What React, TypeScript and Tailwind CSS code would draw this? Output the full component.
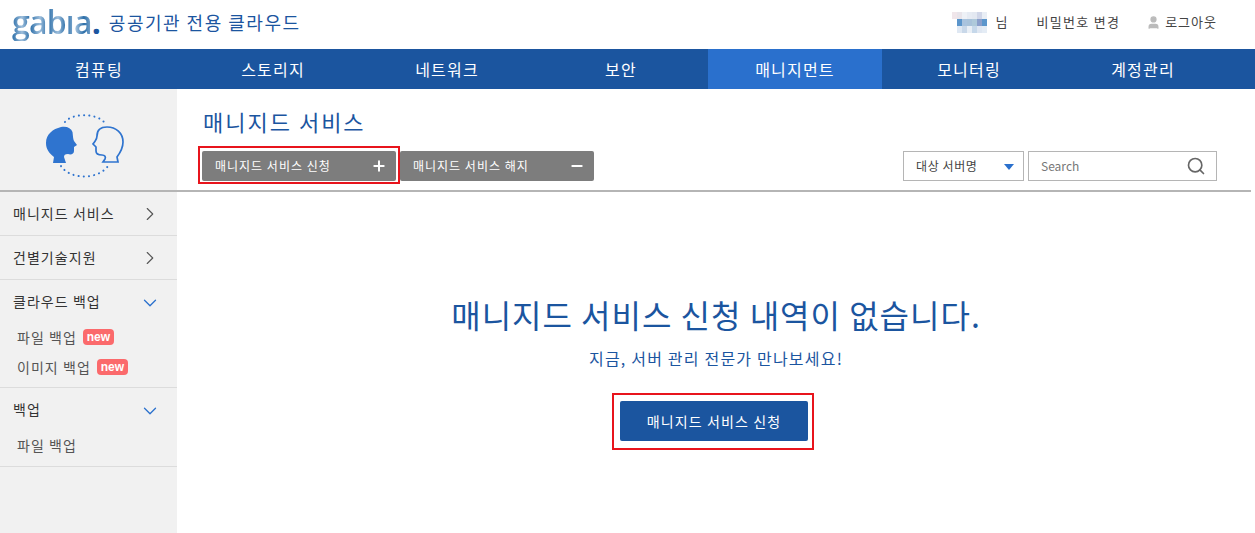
import { ChevronDown, ChevronRight, Minus, Plus, Search, User } from 'lucide-react';

const navItems = ['컴퓨팅', '스토리지', '네트워크', '보안', '매니지먼트', '모니터링', '계정관리'];

const mosaic = [
  ['#f0e6ea', '#e8e4ea', '#eef1f6', '#e6ebf3', '#e3e8f1', '#d0d6e8', '#e9eef5', '#ffffff'],
  ['#ffffff', '#5b95cb', '#a9c3de', '#a8c2da', '#aec9da', '#8b9fcb', '#5b96cc', '#ffffff'],
  ['#ffffff', '#dfe8f3', '#c9d8e9', '#e9eff6', '#c6d8ea', '#dfe7f2', '#e4ecf5', '#ffffff'],
];

// 블러 처리된 사용자 이름
const BlurredName = () => (
  <svg width="40" height="21" viewBox="0 0 40 21" className="block">
    {mosaic.map((row, y) =>
      row.map((fill, x) => <rect key={`${x}-${y}`} x={x * 5} y={y * 7} width="5" height="7" fill={fill} />)
    )}
  </svg>
);

const TalkIcon = () => (
  <svg width="82" height="66" viewBox="0 0 82 66" fill="none">
    <path
      d="M2 29 C2 20 9 15 17 13 C23 12 27 14 28.5 18 C29 22 29 25 30 27 L33 31 L30 33 L30 37 C30 40 27 41 24 40 C21 40 20 41 20 43 L22 49 L9 49 L10 43 C5 39 2 35 2 29 Z"
      fill="#2f74cf"
    />
    <path
      d="M79 28 C79 19 72 13 63 13 C56 13 53 17 53 22 C53 25 52 26 50.5 28 L49 30 L52 33 L52 37 C52 40 55 41 58 41 C61 41 62 43 61 45 L59 48 L74 48 L73 43 C76 39 79 35 79 28 Z"
      stroke="#2f74cf"
      strokeWidth="1.7"
    />
    <path d="M21 8 C28 -1 52 -1 60 8" stroke="#2f74cf" strokeWidth="2" strokeLinecap="round" strokeDasharray="0.1 5.1" />
    <path d="M17 52 C26 66 54 66 64 52" stroke="#2f74cf" strokeWidth="2" strokeLinecap="round" strokeDasharray="0.1 5.1" />
  </svg>
);

const NewBadge = () => (
  <span className="ml-[6px] inline-flex h-4 w-[31px] items-center justify-center rounded-[4px] bg-[#fb6a6c] font-['Liberation_Sans',sans-serif] text-[12px] font-bold tracking-normal text-white">
    new
  </span>
);

const App = () => {
  return (
    <div className="h-[533px] w-[1255px] overflow-hidden bg-white font-['Noto_Sans_CJK_KR',sans-serif]">
      {/* 상단 헤더 */}
      <header className="flex h-[49px] items-center pr-[38px] pb-[5px] pl-3">
        <span className="bg-[repeating-linear-gradient(90deg,#2b6ea8_0px,#9fbfdc_10px,#2b6ea8_18px)] bg-clip-text font-['Open_Sans',sans-serif] text-[32px] leading-[38px] font-semibold tracking-[-0.8px] text-transparent">
          gabıa
        </span>
        <span className="font-['Open_Sans',sans-serif] text-[32px] leading-[38px] font-bold text-[#1b559f]">.</span>
        <span className="ml-[8px] text-[18px] tracking-[1.5px] text-[#1b559f]">공공기관 전용 클라우드</span>
        <div className="ml-auto flex items-center text-[13px] tracking-[1px] text-[#444444]">
          <BlurredName />
          <span className="ml-[3px]">님</span>
          <span className="ml-[28px] tracking-[1.3px]">비밀번호 변경</span>
          <User size={15} fill="#bbbbbb" stroke="#bbbbbb" className="ml-[26px]" />
          <span className="ml-[4px]">로그아웃</span>
        </div>
      </header>

      {/* 메인 내비게이션 */}
      <nav className="flex h-10 bg-[#1b559f] px-3">
        {navItems.map((item) => (
          <a
            key={item}
            className={`flex h-10 w-[174px] items-center justify-center text-[16px] tracking-[1.2px] text-white ${
              item === '매니지먼트' ? 'bg-[#2a70cd]' : ''
            }`}
          >
            {item}
          </a>
        ))}
      </nav>

      <div className="flex h-[444px]">
        {/* 사이드바 */}
        <aside className="w-[177px] shrink-0 bg-[#f1f1f1] text-[14px] tracking-[1.05px] text-[#333333]">
          <div className="flex h-[103px] items-center justify-center border-b-2 border-[#b5b5b5] pt-[14px] pr-[7px]">
            <TalkIcon />
          </div>
          <div className="flex h-[44px] items-center justify-between border-b border-[#dcdcdc] pr-4 pl-[13px]">
            매니지드 서비스
            <ChevronRight size={22} strokeWidth={1.2} className="text-[#555555]" />
          </div>
          <div className="flex h-[44px] items-center justify-between border-b border-[#dcdcdc] pr-4 pl-[13px]">
            건별기술지원
            <ChevronRight size={22} strokeWidth={1.2} className="text-[#555555]" />
          </div>
          <div className="h-[108px] border-b border-[#dcdcdc]">
            <div className="flex h-[42px] items-center justify-between pr-4 pl-[13px]">
              클라우드 백업
              <ChevronDown size={22} strokeWidth={1.4} className="mt-[3px] text-[#2a70cd]" />
            </div>
            <div className="flex h-[30px] items-center pl-[17px] text-[#555555]">
              파일 백업
              <NewBadge />
            </div>
            <div className="flex h-[30px] items-center pl-[17px] text-[#555555]">
              이미지 백업
              <NewBadge />
            </div>
          </div>
          <div className="h-[79px] border-b border-[#dcdcdc]">
            <div className="flex h-[42px] items-center justify-between pt-[1px] pr-4 pl-[13px]">
              백업
              <ChevronDown size={22} strokeWidth={1.4} className="mt-[3px] text-[#2a70cd]" />
            </div>
            <div className="flex h-[30px] items-center pl-[17px] text-[#555555]">파일 백업</div>
          </div>
        </aside>

        <main className="min-w-0 flex-1">
          {/* 타이틀 + 툴바 */}
          <div className="mr-[4px] h-[103px] border-b-2 border-[#b5b5b5] pt-[17px] pl-[26px]">
            <h1 className="text-[22px] leading-[30px] font-normal tracking-[2px] text-[#1b559f]">매니지드 서비스</h1>
            <div className="mt-[10px] flex items-start">
              <div className="-ml-[5px] border-2 border-[#e8141c] px-[2px] pt-[3px] pb-[1px]">
                <button className="flex h-[30px] w-[194px] items-center justify-between rounded-[2px] bg-[#7d7d7d] pr-[9px] pl-[13px] text-[12px] tracking-[1px] text-white">
                  매니지드 서비스 신청
                  <Plus size={16} strokeWidth={3} />
                </button>
              </div>
              <button className="mt-[5px] flex h-[30px] w-[194px] items-center justify-between rounded-[2px] bg-[#7d7d7d] pr-[9px] pl-[13px] text-[12px] tracking-[1px] text-white">
                매니지드 서비스 해지
                <Minus size={16} strokeWidth={3} />
              </button>
              <div className="mt-[5px] ml-auto flex items-center pr-[34px]">
                <div className="flex h-[30px] w-[121px] items-center justify-between border border-[#b5b5b5] pr-[9px] pl-[12px] text-[12px] tracking-[0.6px] text-[#444444]">
                  대상 서버명
                  <span className="mt-[2px] h-0 w-0 border-x-[5px] border-t-[6px] border-x-transparent border-t-[#2a70cd]" />
                </div>
                <div className="ml-[4px] flex h-[30px] w-[189px] items-center justify-between border border-[#b5b5b5] pr-[10px] pl-[12px] text-[12px] text-[#777777]">
                  Search
                  <Search size={20} strokeWidth={2} className="text-[#666666]" />
                </div>
              </div>
            </div>
          </div>

          {/* 빈 상태 */}
          <div className="flex flex-col items-center pt-[100px]">
            <h2 className="text-[32px] leading-[44px] font-normal tracking-[1px] text-[#1b559f]">매니지드 서비스 신청 내역이 없습니다.</h2>
            <p className="mt-[11px] text-[16px] leading-[22px] tracking-[1.2px] text-[#1b559f]">지금, 서버 관리 전문가 만나보세요!</p>
            <div className="mt-[24px] mr-[6px] border-2 border-[#e8141c] pt-[6px] pr-1 pb-[7px] pl-[6px]">
              <button className="block h-10 w-[188px] rounded-[2px] bg-[#1b559f] text-[14px] tracking-[1.1px] text-white">매니지드 서비스 신청</button>
            </div>
          </div>
        </main>
      </div>
    </div>
  );
};

export default App;
